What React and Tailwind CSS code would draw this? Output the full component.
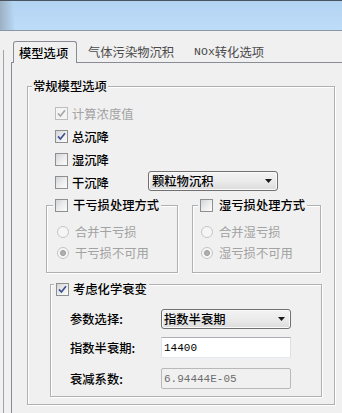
import React from "react";

const Check = ({ checked, disabled }) => (
  <span
    className={
      disabled
        ? "flex h-[13px] w-[13px] shrink-0 items-center justify-center border border-[#bdbdbd] bg-[#f4f4f4]"
        : "flex h-[13px] w-[13px] shrink-0 items-center justify-center border border-[#8e8f8f] bg-gradient-to-br from-[#d2d4d8] via-[#ececec] to-[#fbfbfb]"
    }
  >
    {checked && (
      <svg width="9" height="9" viewBox="0 0 9 9">
        <path
          d="M1 4.4 L3.4 7 L8 1.2"
          fill="none"
          stroke={disabled ? "#a8a8a8" : "#3d5294"}
          strokeWidth="1.7"
        />
      </svg>
    )}
  </span>
);

const Radio = ({ checked }) => (
  <span className="flex h-[12px] w-[12px] shrink-0 items-center justify-center rounded-full border border-[#c4c4c4] bg-[#f5f5f5]">
    {checked && (
      <span className="h-[6px] w-[6px] rounded-full border border-[#9a9a9a] bg-[#b0b0b0]" />
    )}
  </span>
);

const Arrow = () => (
  <svg width="7" height="4" viewBox="0 0 7 4">
    <path d="M0 0 H7 L3.5 4 Z" fill="#1a1a1a" />
  </svg>
);

const Select = ({ children, pl }) => (
  <div
    className={
      "flex h-[20px] w-[130px] shrink-0 items-center justify-between self-start rounded-[3px] border border-[#707070] bg-gradient-to-b from-[#f3f3f3] via-[#ebebeb] to-[#dcdcdc] pr-[5px] shadow-[inset_0_0_0_1px_#fafafa] " +
      pl
    }
  >
    <span>{children}</span>
    <Arrow />
  </div>
);

export default function App() {
  return (
    <div className="h-[413px] w-[342px] overflow-hidden bg-[#f0f0f0] font-['Noto_Sans_CJK_SC','Noto_Sans',sans-serif] text-[12.3px] leading-[16px] font-medium text-black">
      {/* title bar */}
      <div className="flex h-[31px] border-t border-b border-t-[#4b5562] border-b-[#8a96a3]">
        <div className="w-[14px] bg-gradient-to-r from-[#9cb0c4] to-[#b7d6f3]" />
        <div className="flex-1 bg-gradient-to-b from-[#b2d3f2] to-[#bddcf8]" />
      </div>

      <div className="flex h-[382px]">
        <div className="w-[3px]" />
        <div className="mt-[19px] w-[8px] border-l border-[#a3a3a3]" />
        <div className="flex flex-1 flex-col">
          {/* tabs */}
          <div className="relative z-10 -mb-px flex h-[32px] items-end pl-[2px]">
            <div className="flex h-[22px] w-[64px] items-center rounded-t-[3px] border border-b-0 border-[#898c95] bg-[#f0f0f0] pl-[5px]">
              模型选项
            </div>
            <div className="ml-[11px] flex h-[22px] items-center font-normal text-[#4a4a4a]">
              气体污染物沉积
            </div>
            <div className="ml-[20px] flex h-[22px] items-center font-normal text-[#4a4a4a]">
              <span className="font-['Liberation_Mono',monospace] text-[11.5px]">NOx</span>
              转化选项
            </div>
          </div>

          {/* panel */}
          <div className="flex-1 border-t border-l border-[#898c95] pt-[23px] pl-[15px]">
            {/* group A */}
            <div className="relative h-[319px] w-[308px] border border-[#b0b0b0] shadow-[1px_1px_0_#ffffff,inset_1px_1px_0_#ffffff]">
              <span className="absolute top-[-9px] left-[4px] bg-[#f0f0f0] px-[1px]">
                常规模型选项
              </span>

              <div className="flex flex-col pt-[15px] pl-[27px]">
                <div className="flex h-[23px] items-center gap-[4px] font-normal text-[#a2a2a2]">
                  <Check checked disabled />
                  <span>计算浓度值</span>
                </div>
                <div className="flex h-[23px] items-center gap-[4px]">
                  <Check checked />
                  <span>总沉降</span>
                </div>
                <div className="flex h-[23px] items-center gap-[4px]">
                  <Check />
                  <span>湿沉降</span>
                </div>
                <div className="flex h-[23px] items-center">
                  <span className="flex w-[93px] items-center gap-[4px]">
                    <Check />
                    <span>干沉降</span>
                  </span>
                  <Select pl="pl-[3px]">颗粒物沉积</Select>
                </div>
              </div>

              <div className="mt-[11px] flex gap-[14px] pl-[18px]">
                <div className="relative h-[68px] w-[132px] border border-[#b0b0b0] shadow-[1px_1px_0_#ffffff,inset_1px_1px_0_#ffffff]">
                  <span className="absolute top-[-9px] left-[6px] flex items-center gap-[5px] bg-[#f0f0f0] px-[2px]">
                    <Check />
                    <span>干亏损处理方式</span>
                  </span>
                  <div className="flex flex-col pt-[15px] pl-[10px] font-normal text-[#a2a2a2]">
                    <div className="flex h-[21px] items-center gap-[6px]">
                      <Radio />
                      <span>合并干亏损</span>
                    </div>
                    <div className="flex h-[21px] items-center gap-[6px]">
                      <Radio checked />
                      <span>干亏损不可用</span>
                    </div>
                  </div>
                </div>

                <div className="relative h-[68px] w-[129px] border border-[#b0b0b0] shadow-[1px_1px_0_#ffffff,inset_1px_1px_0_#ffffff]">
                  <span className="absolute top-[-9px] left-[5px] flex items-center gap-[6px] bg-[#f0f0f0] px-[2px]">
                    <Check />
                    <span>湿亏损处理方式</span>
                  </span>
                  <div className="flex flex-col pt-[15px] pl-[8px] font-normal text-[#a2a2a2]">
                    <div className="flex h-[21px] items-center gap-[6px]">
                      <Radio />
                      <span>合并湿亏损</span>
                    </div>
                    <div className="flex h-[21px] items-center gap-[6px]">
                      <Radio checked />
                      <span>湿亏损不可用</span>
                    </div>
                  </div>
                </div>
              </div>

              {/* group C */}
              <div className="relative mt-[11px] ml-[22px] h-[113px] w-[272px] border border-[#b0b0b0] shadow-[1px_1px_0_#ffffff,inset_1px_1px_0_#ffffff]">
                <span className="absolute top-[-4px] left-[3px] flex items-center gap-[4px] bg-[#f0f0f0] px-[2px]">
                  <Check checked />
                  <span>考虑化学衰变</span>
                </span>
                <div className="flex flex-col pt-[24px] pl-[19px]">
                  <div className="flex h-[20px] items-center">
                    <span className="w-[91px]">参数选择:</span>
                    <Select pl="pl-[2px]">指数半衰期</Select>
                  </div>
                  <div className="mt-[8px] flex h-[21px] items-center">
                    <span className="w-[91px]">指数半衰期:</span>
                    <div className="flex h-[21px] w-[130px] items-center border border-[#abadb3] border-r-[#dbdfe6] border-b-[#e3e9ef] border-l-[#e2e3ea] bg-white pl-[2px] font-['Liberation_Mono',monospace] text-[11px] font-normal">
                      14400
                    </div>
                  </div>
                  <div className="mt-[10px] flex h-[21px] items-center">
                    <span className="w-[91px]">衰减系数:</span>
                    <div className="flex h-[21px] w-[130px] items-center rounded-[2px] border border-[#b9b9b9] bg-[#f0f0f0] pl-[2px] font-['Liberation_Mono',monospace] text-[11px] font-normal text-[#6d6d6d]">
                      6.94444E-05
                    </div>
                  </div>
                </div>
              </div>
            </div>
          </div>
        </div>
      </div>
    </div>
  );
}
